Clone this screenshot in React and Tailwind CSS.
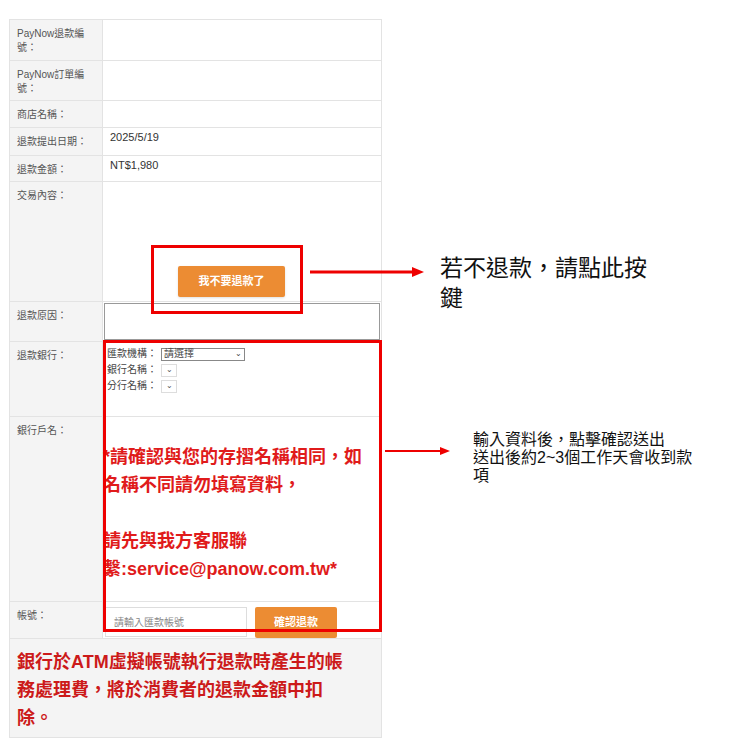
const F = { fontFamily: '"Liberation Sans", "Noto Sans CJK TC", sans-serif' };

const Row = ({ label, h, children }) => (
  <div className="flex border-b border-[#e3e3e3]" style={{ height: h }}>
    <div className="w-[93px] shrink-0 bg-[#f4f4f4] border-r border-[#e3e3e3] px-[7px] pt-[7px] text-[10px] leading-[14px] text-[#555]">
      {label}
    </div>
    <div className="flex-1 bg-white relative">{children}</div>
  </div>
);

const Sel = () => (
  <span className="inline-flex w-[16px] h-[13px] border border-[#ddd] items-center justify-center text-[8px] text-[#555]">⌄</span>
);

export default function App() {
  return (
    <div className="relative w-[753px] h-[747px] bg-white" style={F}>
      <div className="absolute left-[9px] top-[19px] w-[373px] border border-[#e3e3e3] border-b-0">
        <Row label="PayNow退款編號：" h={41} />
        <Row label="PayNow訂單編號：" h={40} />
        <Row label="商店名稱：" h={27} />
        <Row label="退款提出日期：" h={28}>
          <div className="pl-[7px] pt-[1px] text-[11px] text-[#333]">2025/5/19</div>
        </Row>
        <Row label="退款金額：" h={26}>
          <div className="pl-[7px] pt-[1px] text-[11px] text-[#333]">NT$1,980</div>
        </Row>
        <Row label="交易內容：" h={120}>
          <div className="absolute left-[75px] top-[84px] w-[107px] h-[31px] bg-[#ec8c33] rounded-[2px] shadow flex items-center justify-center text-white text-[11px] font-bold">
            我不要退款了
          </div>
        </Row>
        <Row label="退款原因：" h={40}>
          <div className="absolute inset-[1px] border border-[#999]" />
        </Row>
        <Row label="退款銀行：" h={75}>
          <div className="pl-[4px] pt-[4px] text-[10px] leading-[16px] text-[#444]">
            <div className="flex items-center gap-[4px]">匯款機構：<span className="inline-flex w-[84px] h-[13px] border border-[#888] items-center justify-between px-[2px]">請選擇<span className="text-[8px]">⌄</span></span></div>
            <div className="flex items-center gap-[4px]">銀行名稱：<Sel /></div>
            <div className="flex items-center gap-[4px]">分行名稱：<Sel /></div>
          </div>
        </Row>
        <Row label="銀行戶名：" h={185}>
          <div className="pt-[26px] text-[18px] leading-[28px] font-bold text-[#e01b1b] whitespace-nowrap">
            *請確認與您的存摺名稱相同，如<br />
            名稱不同請勿填寫資料，<br />
            <br />
            請先與我方客服聯<br />
            繫:service@panow.com.tw*
          </div>
        </Row>
        <Row label="帳號：" h={37}>
          <div className="flex gap-[8px] pl-[2px] pt-[5px]">
            <div className="w-[142px] h-[30px] border border-[#ddd] flex items-center pl-[8px] text-[10px] text-[#888]">請輸入匯款帳號</div>
            <div className="w-[82px] h-[31px] bg-[#ec8c33] rounded-[2px] flex items-center justify-center text-white text-[11px] font-bold">確認退款</div>
          </div>
        </Row>
        <div className="bg-[#f4f4f4] border-b border-[#e3e3e3] h-[99px] px-[7px] pt-[9px] text-[18px] leading-[28px] font-bold text-[#cc1a1a] whitespace-nowrap">
          銀行於ATM虛擬帳號執行退款時產生的帳<br />
          務處理費，將於消費者的退款金額中扣<br />
          除。
        </div>
      </div>

      <div className="absolute left-[151px] top-[245px] w-[152px] h-[69px] border-[3px] border-[#ee0000]" />
      <div className="absolute left-[103px] top-[340px] w-[279px] h-[292px] border-[3px] border-[#ee0000]" />

      <svg className="absolute left-0 top-0" width="753" height="747">
        <line x1="310" y1="272" x2="415" y2="272" stroke="#ee0000" strokeWidth="3" />
        <polygon points="412,267 424,272 412,277" fill="#ee0000" />
        <line x1="385" y1="451" x2="442" y2="451" stroke="#ee0000" strokeWidth="2" />
        <polygon points="440,447 450,451 440,455" fill="#ee0000" />
      </svg>

      <div className="absolute left-[440px] top-[253px] text-[23px] leading-[30px] text-[#111] whitespace-nowrap">若不退款，請點此按<br />鍵</div>
      <div className="absolute left-[473px] top-[431px] text-[16px] leading-[18px] text-[#111] whitespace-nowrap">
        輸入資料後，點擊確認送出<br />送出後約2~3個工作天會收到款<br />項
      </div>
    </div>
  );
}
